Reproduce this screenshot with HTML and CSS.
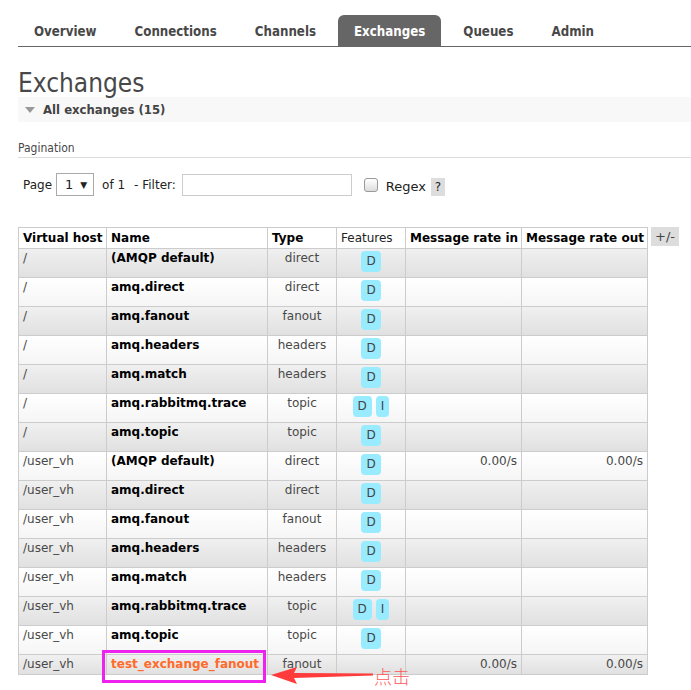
FILE: index.html
```html
<!DOCTYPE html>
<html>
<head>
<meta charset="utf-8">
<link rel="stylesheet" href="styles.css">
</head>
<body>
<div class="page">
  <ul class="menu">
    <li><a>Overview</a></li>
    <li><a>Connections</a></li>
    <li><a>Channels</a></li>
    <li class="active"><a>Exchanges</a></li>
    <li><a>Queues</a></li>
    <li><a>Admin</a></li>
  </ul>
  <h1 class="title">Exchanges</h1>
  <div class="section-head"><span class="tri"></span>All exchanges (15)</div>
  <div class="section-body">
    <h3 class="pag-title">Pagination</h3>
    <div class="pag-row">
      <span>Page</span>
      <span class="select"><span>1</span><span class="arr">▼</span></span>
      <span class="of">of 1</span>
      <span>- Filter:</span>
      <span class="filter"></span>
      <span class="check"></span>
      <span class="regex">Regex</span>
      <span class="help">?</span>
    </div>
    <div class="table-wrap">
      <table class="list">
        <colgroup>
          <col style="width:88px"><col style="width:161px"><col style="width:69px"><col style="width:69px"><col style="width:116px"><col style="width:126px">
        </colgroup>
        <thead>
          <tr><th>Virtual host</th><th>Name</th><th>Type</th><th class="normal">Features</th><th>Message rate in</th><th>Message rate out</th></tr>
        </thead>
        <tbody>
          <tr class="alt1"><td>/</td><td class="name">(AMQP default)</td><td class="c">direct</td><td class="c"><span class="badge">D</span></td><td class="r"></td><td class="r"></td></tr>
          <tr class="alt2"><td>/</td><td class="name">amq.direct</td><td class="c">direct</td><td class="c"><span class="badge">D</span></td><td class="r"></td><td class="r"></td></tr>
          <tr class="alt1"><td>/</td><td class="name">amq.fanout</td><td class="c">fanout</td><td class="c"><span class="badge">D</span></td><td class="r"></td><td class="r"></td></tr>
          <tr class="alt2"><td>/</td><td class="name">amq.headers</td><td class="c">headers</td><td class="c"><span class="badge">D</span></td><td class="r"></td><td class="r"></td></tr>
          <tr class="alt1"><td>/</td><td class="name">amq.match</td><td class="c">headers</td><td class="c"><span class="badge">D</span></td><td class="r"></td><td class="r"></td></tr>
          <tr class="alt2"><td>/</td><td class="name">amq.rabbitmq.trace</td><td class="c">topic</td><td class="c"><span class="badge">D</span><span class="badge">I</span></td><td class="r"></td><td class="r"></td></tr>
          <tr class="alt1"><td>/</td><td class="name">amq.topic</td><td class="c">topic</td><td class="c"><span class="badge">D</span></td><td class="r"></td><td class="r"></td></tr>
          <tr class="alt2"><td>/user_vh</td><td class="name">(AMQP default)</td><td class="c">direct</td><td class="c"><span class="badge">D</span></td><td class="r">0.00/s</td><td class="r">0.00/s</td></tr>
          <tr class="alt1"><td>/user_vh</td><td class="name">amq.direct</td><td class="c">direct</td><td class="c"><span class="badge">D</span></td><td class="r"></td><td class="r"></td></tr>
          <tr class="alt2"><td>/user_vh</td><td class="name">amq.fanout</td><td class="c">fanout</td><td class="c"><span class="badge">D</span></td><td class="r"></td><td class="r"></td></tr>
          <tr class="alt1"><td>/user_vh</td><td class="name">amq.headers</td><td class="c">headers</td><td class="c"><span class="badge">D</span></td><td class="r"></td><td class="r"></td></tr>
          <tr class="alt2"><td>/user_vh</td><td class="name">amq.match</td><td class="c">headers</td><td class="c"><span class="badge">D</span></td><td class="r"></td><td class="r"></td></tr>
          <tr class="alt1"><td>/user_vh</td><td class="name">amq.rabbitmq.trace</td><td class="c">topic</td><td class="c"><span class="badge">D</span><span class="badge">I</span></td><td class="r"></td><td class="r"></td></tr>
          <tr class="alt2"><td>/user_vh</td><td class="name">amq.topic</td><td class="c">topic</td><td class="c"><span class="badge">D</span></td><td class="r"></td><td class="r"></td></tr>
          <tr class="alt1 short"><td>/user_vh</td><td class="name hl">test_exchange_fanout</td><td class="c">fanout</td><td class="c"></td><td class="r">0.00/s</td><td class="r">0.00/s</td></tr>
        </tbody>
      </table>
      <span class="toggle">+/-</span>
      <span class="hl-box"></span>
      <svg class="arrow" width="110" height="22" viewBox="0 0 110 22"><path d="M2 10 L28 2 L25 8 L104 8.5 L104 10.5 L25 13 L28 19 Z" fill="#ff3b3b"/></svg>
      <span class="note">点击</span>
    </div>
  </div>
</div>
</body>
</html>
```
FILE: styles.css
```css
html, body {
  margin: 0;
  padding: 0;
  background: #fff;
}
.page {
  padding: 15px 0 16px 18px;
  font-family: "DejaVu Sans", Verdana, sans-serif;
  font-size: 12px;
  color: #484848;
}
.menu {
  list-style: none;
  margin: 0;
  padding: 0;
  display: flex;
  gap: 6px;
  border-bottom: 1px solid #666;
  height: 31px;
}
.menu li a {
  display: block;
  height: 28px;
  line-height: 28px;
  padding: 3px 16px 0 16px;
  font-family: "DejaVu Sans Condensed", "DejaVu Sans", sans-serif;
  font-stretch: condensed;
  font-weight: bold;
  font-size: 13.2px;
  color: #484848;
  border-radius: 6px 6px 0 0;
}
.menu li.active a {
  background: #666;
  color: #fff;
}
.title {
  margin: 21px 0 -1px 0;
  font-family: "DejaVu Sans Condensed", "DejaVu Sans", sans-serif;
  font-stretch: condensed;
  font-weight: normal;
  font-size: 26px;
  line-height: 30px;
  color: #484848;
}
.section-head {
  background: #f8f8f8;
  height: 25px;
  line-height: 25px;
  padding-left: 7px;
  font-family: "DejaVu Sans Condensed", "DejaVu Sans", sans-serif;
  font-stretch: condensed;
  font-weight: bold;
  font-size: 13px;
  color: #444;
  display: flex;
  align-items: center;
}
.tri {
  width: 0;
  height: 0;
  border-left: 5px solid transparent;
  border-right: 5px solid transparent;
  border-top: 6px solid #999;
  margin-right: 8px;
}
.pag-title {
  margin: 18px 0 0 0;
  font-weight: normal;
  font-family: "DejaVu Sans Condensed", "DejaVu Sans", sans-serif;
  font-stretch: condensed;
  font-size: 12px;
  line-height: 17px;
  border-bottom: 1px solid #ddd;
  color: #484848;
}
.pag-row {
  margin-top: 15px;
  padding-left: 5px;
  display: flex;
  align-items: center;
  height: 23px;
  color: #222;
}
.select {
  margin-left: 4px;
  width: 38px;
  height: 23px;
  box-sizing: border-box;
  border: 1px solid #aaa;
  display: flex;
  align-items: center;
  padding-left: 8px;
  font-size: 13px;
}
.select .arr {
  font-size: 9px;
  margin-left: 7px;
}
.of {
  margin: 0 9px 0 8px;
}
.filter {
  margin-left: 6px;
  width: 170px;
  height: 22px;
  box-sizing: border-box;
  border: 1px solid #ccc;
}
.check {
  margin-left: 12px;
  width: 12px;
  height: 12px;
  border: 1px solid #999;
  border-radius: 3px;
  background: linear-gradient(#fff, #ddd);
}
.regex {
  margin-left: 8px;
  font-size: 13px;
  position: relative;
  top: 2px;
}
.help {
  margin-left: 5px;
  background: #ddd;
  width: 14px;
  height: 18px;
  line-height: 18px;
  text-align: center;
  position: relative;
  top: 2px;
}
.table-wrap {
  position: relative;
  margin-top: 31px;
  display: flex;
  align-items: flex-start;
  gap: 3px;
}
.list {
  border-collapse: collapse;
  table-layout: fixed;
  width: 629px;
}
.list th, .list td {
  border: 1px solid #ccc;
  padding: 2px 4px;
  line-height: 15px;
  text-align: left;
  vertical-align: top;
  white-space: nowrap;
}
.list th {
  font-weight: bold;
  color: #000;
  height: 15px;
  padding-top: 3px;
}
.list th.normal {
  font-weight: normal;
  color: #222;
}
.list td {
  height: 24px;
  color: #484848;
}
.list tr.short td {
  height: 15px;
}
.list td.c {
  text-align: center;
}
.list td.r {
  text-align: right;
}
.list td.name {
  font-weight: bold;
  color: #000;
}
.list td.hl {
  color: #ff6a2b;
}
.alt1 {
  background: linear-gradient(#f0f0f0, #e0e0e0);
}
.alt2 {
  background: linear-gradient(#fff, #f5f5f5);
}
.badge {
  display: inline-block;
  background: #99ebff;
  color: #444;
  height: 21px;
  line-height: 21px;
  padding: 0 5px;
  border-radius: 4px;
  margin: 0 2px;
  vertical-align: top;
}
.hl-box {
  position: absolute;
  left: 84px;
  bottom: -8px;
  width: 164px;
  height: 33px;
  box-sizing: border-box;
  border: 3px solid #ee22ee;
}
.arrow {
  position: absolute;
  left: 251px;
  bottom: -12px;
}
.note {
  position: absolute;
  left: 356px;
  bottom: -11px;
  font-family: "Noto Sans CJK SC", sans-serif;
  font-weight: 300;
  font-size: 18px;
  line-height: 20px;
  color: #ff5a5a;
}
.toggle {
  background: #ddd;
  height: 19px;
  line-height: 19px;
  padding: 0 4px;
  font-size: 13px;
  color: #444;
}
```
